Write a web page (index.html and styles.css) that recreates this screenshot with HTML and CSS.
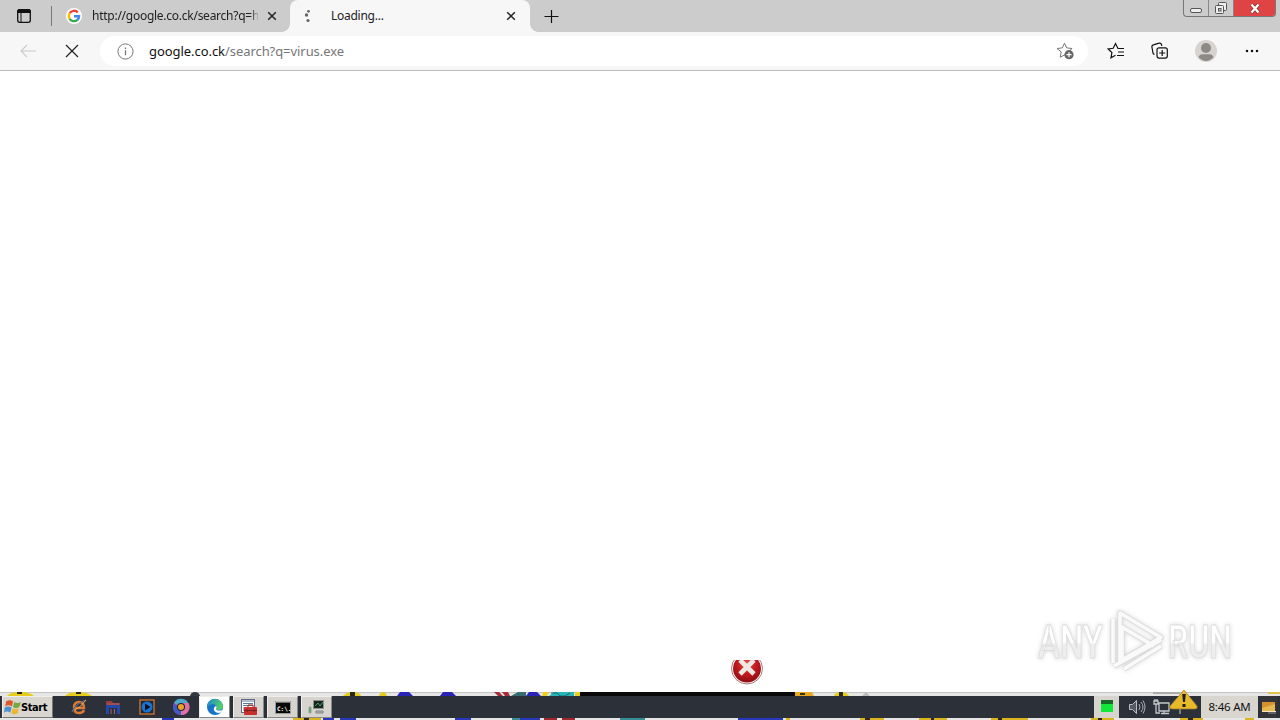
FILE: index.html
```html
<!DOCTYPE html>
<html lang="en">
<head>
    <meta charset="UTF-8">
    <title>Loading...</title>
    <link rel="stylesheet" href="styles.css">
</head>
<body>

<div class="tabbar">
    <svg class="tab-actions" width="16" height="16" viewBox="0 0 16 16"><rect x="1.7" y="1.7" width="12.6" height="12.6" rx="2" fill="none" stroke="#111" stroke-width="1.3"/><path d="M1.500 3.500a2 2 0 0 1 2-2h9a2 2 0 0 1 2 2V4.500h-13z" fill="#111" stroke="#111"/><path d="M5 5v9" stroke="#111"/></svg>
    <div class="divider"></div>
    <div class="tab">
        <svg width="18" height="18" viewBox="0 0 18 18"><circle cx="9" cy="9" r="8" fill="#fff"/><g fill="none" stroke-width="2.4"><path d="M4.7 6.2A5.2 5.2 0 0 1 12.8 5.4" stroke="#ea4335"/><path d="M4.7 6.2a5.2 5.2 0 0 0 0 5.6" stroke="#fbbc05"/><path d="M4.7 11.8a5.2 5.2 0 0 0 7.6 1.2" stroke="#34a853"/><path d="M12.3 13a5 5 0 0 0 1.8-3.8H9" stroke="#4285f4"/></g></svg>
        <span class="tab-title">http://google.co.ck/search?q=h</span>
        <svg class="close" width="10" height="10" viewBox="0 0 10 10"><path d="M1.2 1.2l7.6 7.6M8.8 1.2L1.2 8.8"/></svg>
    </div>
    <div class="tab active">
        <svg width="18" height="18" viewBox="0 0 18 18" fill="#666"><circle cx="10.5" cy="4.3" r="1.4"/><circle cx="8.5" cy="8" r="1.7"/><circle cx="10" cy="13.5" r="1.6"/></svg>
        <span class="tab-title">Loading...</span>
        <svg class="close" width="10" height="10" viewBox="0 0 10 10"><path d="M1.2 1.2l7.6 7.6M8.8 1.2L1.2 8.8"/></svg>
    </div>
    <svg class="new-tab" width="15" height="15" viewBox="0 0 15 15"><path d="M7.5 1v13M.5 7.5h14" stroke="#111" stroke-width="1.2"/></svg>
    <div class="window-controls">
        <div class="ctl min"><svg width="14" height="8" viewBox="0 0 14 8"><rect x="1.5" y="2.5" width="11" height="4" rx="1.5" fill="#eee" stroke="#555"/></svg></div>
        <div class="ctl restore"><svg width="14" height="14" viewBox="0 0 14 14" fill="#eee" stroke="#555"><rect x="4.5" y="1.5" width="8" height="8" rx="1"/><rect x="1.5" y="4.5" width="8" height="8" rx="1"/><rect x="4.5" y="7.5" width="2.5" height="2.5" fill="#ccc"/></svg></div>
        <div class="ctl quit"><svg width="12" height="11" viewBox="0 0 12 11"><path d="M2.5 1.5l7 8M9.5 1.5l-7 8" stroke="#8c3330" stroke-width="4"/><path d="M2.5 1.5l7 8M9.5 1.5l-7 8" stroke="#fff" stroke-width="2.3"/></svg></div>
    </div>
</div>

<div class="toolbar">
    <svg class="back" width="16" height="14" viewBox="0 0 16 14"><path d="M7 .8L1 7l6 6.2M1 7h15" fill="none" stroke="#c8c8c8" stroke-width="1.1"/></svg>
    <svg class="stop" width="14" height="14" viewBox="0 0 14 14"><path d="M1 1l12 12M13 1L1 13" stroke="#222" stroke-width="1.2"/></svg>
    <div class="address">
        <svg width="17" height="17" viewBox="0 0 17 17"><circle cx="8.5" cy="8.5" r="7.6" fill="none" stroke="#777"/><path d="M8.5 7.3v5M8.5 4.4v1.5" stroke="#777" stroke-width="1.3"/></svg>
        <span class="url"><b>google.co.ck</b>/search?q=virus.exe</span>
        <svg class="fav" width="18" height="18" viewBox="0 0 18 18"><path d="M8.5 1.2l2.2 4.7 5.4.6-3 2.7M9 12.7l-4.8 2.5 1-5.3L1 6.5l5.3-.6 2.2-4.7" fill="none" stroke="#777"/><circle cx="13" cy="12.7" r="4.6" fill="#666"/><path d="M13 10.2v5M10.5 12.7h5" stroke="#fff" stroke-width="1.2"/></svg>
    </div>
    <svg class="favorites" width="18" height="18" viewBox="0 0 18 18"><path d="M17 6.5h-6L8.5 1.5 6.2 6.3l-5 .7 3.7 3.5-.9 5.3 4.5-2.5M11 10h6M10 13.5h7" fill="none" stroke="#111" stroke-width="1.2"/></svg>
    <svg class="collections" width="18" height="18" viewBox="0 0 18 18" fill="none" stroke="#111" stroke-width="1.2"><path d="M3.5 12.5a2 2 0 0 1-1.5-1.5L.9 5a2 2 0 0 1 1.5-2.2L8 1.2a2 2 0 0 1 2.5 1.3l.3 1.5"/><rect x="6" y="5.8" width="10.3" height="10.3" rx="2"/><path d="M11.2 8v6M8.2 11h6"/></svg>
    <svg class="avatar" width="22" height="22" viewBox="0 0 22 22"><circle cx="11" cy="11" r="11" fill="#d6d3d0"/><circle cx="11" cy="8" r="5" fill="#8d8985"/><path d="M3.5 17.3q1-3 4-3h7q3 0 4 3Q15 21 11 21t-7.500-3.700z" fill="#8d8985"/></svg>
    <svg class="more" width="14" height="4" viewBox="0 0 14 4" fill="#111"><circle cx="2" cy="2" r="1.25"/><circle cx="7" cy="2" r="1.25"/><circle cx="12" cy="2" r="1.25"/></svg>
</div>

<div class="page">
    <svg class="error-icon" width="34" height="26" viewBox="0 0 34 26">
        <defs><radialGradient id="red" cx=".5" cy=".35" r=".65"><stop offset="0" stop-color="#e25a50"/><stop offset=".5" stop-color="#c41b20"/><stop offset="1" stop-color="#8e0d14"/></radialGradient></defs>
        <circle cx="17" cy="8.500" r="15.500" fill="#fff" stroke="#a77"/><circle cx="17" cy="8.500" r="14" fill="url(#red)"/>
        <path d="M10 0l14 14M24 0L10 14" stroke="#ece9e5" stroke-width="4.600"/>
    </svg>
    <svg class="watermark" width="220" height="76" viewBox="0 0 220 76">
        <defs><linearGradient id="fade" x1="0" y1="0" x2="0" y2="1"><stop offset=".5" stop-color="#fff"/><stop offset=".55" stop-color="#eee"/></linearGradient></defs>
        <text x="8" y="54" textLength="65" lengthAdjust="spacingAndGlyphs">ANY</text>
        <text x="138" y="54" textLength="64" lengthAdjust="spacingAndGlyphs">RUN</text>
        <path d="M83 59V15M90 58V9L131 33.500 92 56V23L124 42M84 62L131 36M94 65L131 42" fill="none" stroke="#dedede" stroke-width="5.500" stroke-linejoin="round"/>
        <path d="M83 59V15M90 58V9L131 33.500 92 56V23L124 42M84 62L131 36M94 65L131 42" fill="none" stroke="#fafafa" stroke-width="3.500" stroke-linejoin="round"/>
    </svg>
</div>

<!-- desktop showing above the taskbar -->
<svg class="desktop" width="1280" height="4" viewBox="0 0 1280 4">
    <path d="M0 .5h1280" stroke="#c4c4c4"/>
    <path d="M7 4q3-4 13-4t14 4zM65 4q3-4 13-4t14 4zM343 4q3-4 10-4t8 4zM379 4q1-4 4-4t4 4zM834 4q1-4 7-4t8 4z" fill="#e6cc1c"/>
    <path d="M17 0h5v2h-5zM76 0h5v2h-5zM350 0h5v4h-5zM839 0h4v4h-4z" fill="#2b270d"/>
    <path d="M190 4q1-4 5-4t5 4z" fill="#343843"/>
    <path d="M397 4l3-4h9l4 4zM440 4l3-4h9l4 4zM526 4l3-4h8l4 4z" fill="#2924b5"/>
    <path d="M494 0h5l4 4h-5zM502 0h6l2 4h-5z" fill="#a52c3a"/>
    <path d="M511 4l7-4h8v4z" fill="#356d70"/><path d="M543 0h6l-2 4h-5zM575 0h5v4h-5z" fill="#edcf20"/>
    <path d="M549 4l5-4h20v4z" fill="#28b5b8"/><path d="M551 1h6l3 3h5l5-3" fill="none" stroke="#176d73"/>
    <path d="M580 0h215v4H580z" fill="#080808"/><path d="M795 0h17l2 4h-19z" fill="#e8a91c"/><path d="M800 1h5v2h-5z" fill="#332"/>
    <path d="M1153 0h27v2h-27z" fill="#aaa"/><path d="M1268 0h12v2h-12z" fill="#ddc34a"/><path d="M862 4l4-4 4 4z" fill="#bbb"/>
</svg>

<div class="taskbar">
    <div class="start">
        <svg width="17" height="16" viewBox="0 0 15 14"><path d="M2 2q3-2 6 0L7 6.500q-3-2-6 0z" fill="#df562b"/><path d="M9 2.500q3 2 6 0L13.500 7q-3 2-5.500 0z" fill="#75a944"/><path d="M.7 7.500q3-2 6 0L5.500 12q-3-2-5.500 0z" fill="#4c91cf"/><path d="M7.700 8q3 2 5.500 0L12 12.500q-3 2-5.500 0z" fill="#edb630"/></svg>
        <span>Start</span>
    </div>
    <div class="launch">
        <svg width="18" height="18" viewBox="0 0 18 18"><path d="M4 10h10q0-6-5-6T4 9.500 9 15q4 0 5-3" fill="none" stroke="#d97b36" stroke-width="2.400"/><path d="M2 14Q5 6 16 2" fill="none" stroke="#5b688d" stroke-width="1.200"/><path d="M5 12Q11 9 16 2" fill="none" stroke="#f0a348"/></svg>
        <svg width="18" height="18" viewBox="0 0 18 18"><path d="M2 3h6l1 2h7v4H2z" fill="#963d36"/><path d="M2 7h14v3H2zM2 10h3v6H2zM13 10h3v6h-3z" fill="#2448aa"/><path d="M7 11v5M10.500 11v5M3 6h12" stroke="#a8626e"/></svg>
        <svg width="18" height="18" viewBox="0 0 18 18"><rect x="2" y="2" width="14" height="14" fill="#18283e" stroke="#d47429" stroke-width="1.300"/><circle cx="9" cy="9" r="5.500" fill="#1874d2"/><path d="M7 5.500v7L12.500 9z" fill="#08111e"/></svg>
        <svg width="18" height="18" viewBox="0 0 18 18"><circle cx="9" cy="9" r="8" fill="#b943a2"/><path d="M9 9L2 5a8 8 0 0 1 14.500 1z" fill="#4baacb"/><path d="M9 9L1.500 6A8 8 0 0 0 9 17z" fill="#4059c8"/><path d="M9 5h7.500A8 8 0 0 1 9 17z" fill="#df70a5"/><circle cx="9" cy="9" r="4" fill="#202331"/><circle cx="9" cy="9" r="3" fill="#eda126"/></svg>
    </div>
    <div class="tasks">
        <div class="task current"><svg width="18" height="18" viewBox="0 0 18 18"><defs><linearGradient id="edge" x1="0" y1="0" x2="1" y2=".3"><stop stop-color="#1683d8"/><stop offset="1" stop-color="#55cf69"/></linearGradient></defs><circle cx="9" cy="9" r="8" fill="#1574c8"/><path d="M1 9a8 8 0 0 1 16-.5q0 3.500-4 3.500-3 0-3-1.500 1-1 0-2.800Q7 3.500 1 9z" fill="url(#edge)"/><path d="M10 10.500q0 3 6.500 1.500l-1.500 2.500q-5 1.500-7-2-1-3 2-4.500 1.500 1 0 2.500z" fill="#fff"/></svg></div>
        <div class="task"><svg width="20" height="18" viewBox="0 0 20 18"><rect x="2.500" y="1.500" width="13" height="13" fill="#fff" stroke="#668"/><path d="M3 3h12M4 5.500h10M4 7.500h10M4 10h3M4 12h3" stroke="#567d94"/><path d="M9 9V7h5v2" fill="none" stroke="#932b2b"/><rect x="5" y="9" width="13" height="8" rx="1" fill="#c8302d"/><path d="M5 12.500h13M8 11v3M15 11v3" stroke="#762326"/></svg></div>
        <div class="task"><svg width="18" height="16" viewBox="0 0 18 16"><rect x="1.500" y="2.500" width="15" height="12" fill="#080808" stroke="#999"/><path d="M2 3h14" stroke="#ddd"/><text class="cmd" x="3" y="11.500">C:\.</text></svg></div>
        <div class="task"><svg width="20" height="18" viewBox="0 0 20 18"><path d="M6.500 2.500h10v8h-10z" fill="#182821" stroke="#8a928b"/><path d="M8 8l3-3 2 3 3-4" fill="none" stroke="#4a9c5e"/><path d="M2 9h2v6H2z" fill="#3ca448" stroke="#9aa39c"/><path d="M9 13h7v2H9z" fill="#b5bab5" stroke="#7d857f"/></svg></div>
    </div>
    <div class="tray">
        <div class="cpu"></div>
        <svg class="speaker" width="18" height="16" viewBox="0 0 18 16"><path d="M1.500 5.500h3l4-4v13l-4-4h-3z" fill="#555b62" stroke="#b9bfc5"/><path d="M11 5q2 3 0 6M13 3q4 5 0 10M15 1.500q4 6.500 0 13" fill="none" stroke="#a9afb5"/></svg>
        <svg class="network" width="18" height="18" viewBox="0 0 18 18"><path d="M6 5h10v8H6zM8 15.500h8M11 13v2M1 3v3h4V3zM2 1v2M4 1v2M3 6v9h4" fill="none" stroke="#c4c7cc" stroke-width="1.300"/></svg>
        <svg class="flag" width="10" height="16" viewBox="0 0 10 16"><path d="M2 1v14M2 2h7v5H2" fill="none" stroke="#c8c9ca"/></svg>
        <svg class="warning" width="32" height="20" viewBox="0 0 32 20"><path d="M16 0l13 16q1 3-2 3H4q-3 0-2-3z" fill="#e8b929" stroke="#9a7831" stroke-width=".7"/><path d="M14.200 4h3.600l-.8 8h-2zM14.500 14h3v3h-3z" fill="#1d211d"/></svg>
        <div class="clock">8:46 AM</div>
        <div class="show-desktop"><svg width="17" height="18" viewBox="0 0 17 18"><path d="M2 4h13v9H2z" fill="#d4912d"/><path d="M2 10l13-4v7H2z" fill="#e7b752"/><path d="M2 13.500h14" stroke="#f3e4c4"/><path d="M8 15h8" stroke="#8a8d94"/></svg></div>
    </div>
</div>

<svg class="desktop below" width="1280" height="2" viewBox="0 0 1280 2">
    <path d="M293 0h28v2h-28zM786 0h4v2h-4zM860 0h24v2h-24zM919 0h28v2h-28zM991 0h37v2h-37zM1091 0h23v2h-23zM1180 0h23v2h-23zM1245 0h9v2h-9z" fill="#dcb51c"/>
    <path d="M304 0h5v2h-5zM865 0h5v2h-5zM931 0h3v2h-3zM998 0h4v2h-4zM1098 0h4v2h-4zM1188 0h5v2h-5z" fill="#302813"/>
    <path d="M162 0h12v2h-12zM323 0h11v2h-11zM340 0h16v2h-16zM455 0h16v2h-16zM520 0h20v2h-20zM738 0h45v2h-45z" fill="#2936be"/>
    <path d="M544 0h13v2h-13zM562 0h13v2h-13z" fill="#a12831"/><path d="M512 0h8v2h-8zM620 0h25v2h-25z" fill="#368f95"/>
</svg>

</body>
</html>
```
FILE: styles.css
```css
* {
    box-sizing: border-box;
}
body {
    margin: 0;
    width: 1280px;
    height: 720px;
    overflow: hidden;
    display: flex;
    flex-direction: column;
    background: #fff;
    font-family: "Noto Sans", sans-serif;
    font-size: 12px;
}
svg {
    display: block;
    flex: none;
}
.tabbar {
    height: 32px;
    flex: none;
    display: flex;
    align-items: center;
    background: #ccc;
    padding-left: 16px;
}
.divider {
    width: 1px;
    height: 20px;
    background: #777;
    margin-left: 19px;
}
.tab {
    display: flex;
    align-items: center;
    width: 238px;
    height: 32px;
    padding: 0 13px 0 13px;
}
.tab-title {
    flex: 1;
    margin-left: 9px;
    margin-right: 9px;
    padding-bottom: 2px;
    overflow: hidden;
    white-space: nowrap;
    font-size: 12px;
    letter-spacing: -.26px;
    color: #222;
}
.tab:not(.active) .tab-title {
    mask-image: linear-gradient(to right, #000 158px, transparent 168px);
}
.close {
    stroke: #222;
    stroke-width: 1.5;
}
.tab.active {
    position: relative;
    width: 240px;
    background: #f7f7f7;
    border-radius: 8px 8px 0 0;
    padding: 0 14px 0 8px;
}
.tab.active .tab-title {
    margin-left: 15px;
}
/* flared feet of the active tab */
.tab.active::before,
.tab.active::after {
    content: "";
    position: absolute;
    bottom: 0;
    width: 8px;
    height: 8px;
}
.tab.active::before {
    left: -8px;
    background: radial-gradient(circle at 0 0, #ccc 7.5px, #f7f7f7 8px);
}
.tab.active::after {
    right: -8px;
    background: radial-gradient(circle at 100% 0, #ccc 7.5px, #f7f7f7 8px);
}
.new-tab {
    margin-left: 14px;
}
.window-controls {
    display: flex;
    align-self: flex-start;
    height: 17px;
    margin-left: auto;
    margin-right: 4px;
    border: 1px solid #777;
    border-top: 0;
    border-radius: 0 0 4px 4px;
    overflow: hidden;
}
.ctl {
    display: flex;
    align-items: center;
    justify-content: center;
    width: 25px;
    border-right: 1px solid #888;
}
.ctl.min {
    padding-top: 4px;
}
.ctl.quit {
    width: 41px;
    background: #e04343;
    border: 0;
}
.toolbar {
    height: 39px;
    flex: none;
    display: flex;
    align-items: center;
    background: #f7f7f7;
    border-bottom: 1px solid #bbb;
    padding-left: 20px;
}
.stop {
    margin-left: 29px;
}
.address {
    display: flex;
    align-items: center;
    width: 988px;
    height: 30px;
    margin-left: 21px;
    padding: 0 14px 0 17px;
    background: #fff;
    border-radius: 15px;
}
.url {
    margin-left: 15px;
    font-size: 13px;
    letter-spacing: -.06px;
    color: #777;
}
.url b {
    font-weight: normal;
    color: #111;
}
.fav {
    margin-left: auto;
}
.favorites {
    margin-left: 19px;
}
.collections {
    margin-left: 26px;
}
.avatar {
    margin-left: 26px;
}
.more {
    margin-left: 28px;
}
.page {
    position: relative;
    flex: 1;
    background: #fff;
}
.error-icon {
    position: absolute;
    left: 730px;
    bottom: 6px;
}
.watermark {
    position: absolute;
    left: 1030px;
    bottom: 12px;
    overflow: visible;
    filter: drop-shadow(0 0 2px #d4d4d4);
}
.watermark text {
    font-family: Roboto, sans-serif;
    font-size: 46px;
    font-weight: 500;
    fill: url(#fade);
    stroke: #dedede;
    stroke-width: .8px;
}
.desktop {
    background: #e6e6e6;
}
.taskbar {
    height: 22px;
    flex: none;
    display: flex;
    align-items: stretch;
    background: #2c3139;
    padding-left: 2px;
}
.start {
    display: flex;
    align-items: center;
    width: 51px;
    padding-left: 1px;
    gap: 0;
    background: #d9d6d0;
    border: 1px solid #f0eeea;
    border-right-color: #777;
    border-bottom-color: #777;
    font-family: "DejaVu Sans Condensed", "DejaVu Sans", sans-serif;
    font-size: 11px;
    font-weight: bold;
    font-stretch: condensed;
    letter-spacing: -.4px;
    color: #000;
}
.launch {
    display: flex;
    align-items: center;
    gap: 16px;
    margin-left: 17px;
}
.tasks {
    display: flex;
    gap: 3px;
    margin-left: 9px;
}
.task {
    display: flex;
    align-items: center;
    justify-content: center;
    width: 31px;
    background: #d7d4cf;
    border: 1px solid #efede9;
    border-right-color: #888;
    border-bottom-color: #888;
}
.task.current {
    background: #fff;
}
.cmd {
    font-family: "DejaVu Sans Mono", monospace;
    font-size: 6px;
    font-weight: bold;
    fill: #fff;
}
.tray {
    position: relative;
    display: flex;
    align-items: center;
    margin-left: auto;
    margin-right: 3px;
}
.cpu {
    width: 25px;
    height: 22px;
    padding: 4px 6px 6px 7px;
    background: linear-gradient(#176b24 4px, #12e83b 4px) content-box, #d7d4cf;
}
.speaker {
    margin-left: 9px;
}
.network {
    margin-left: 7px;
}
.flag {
    margin-left: 7px;
}
.warning {
    position: absolute;
    left: 74px;
    top: -6px;
}
.clock {
    display: flex;
    align-items: center;
    justify-content: center;
    width: 57px;
    height: 22px;
    margin-left: 13px;
    padding-bottom: 1px;
    background: #d9d6d0;
    font-size: 11.5px;
    letter-spacing: -.2px;
    color: #111;
}
.show-desktop {
    margin-left: 2px;
    height: 22px;
    display: flex;
    align-items: center;
    background: #343438;
}
```
